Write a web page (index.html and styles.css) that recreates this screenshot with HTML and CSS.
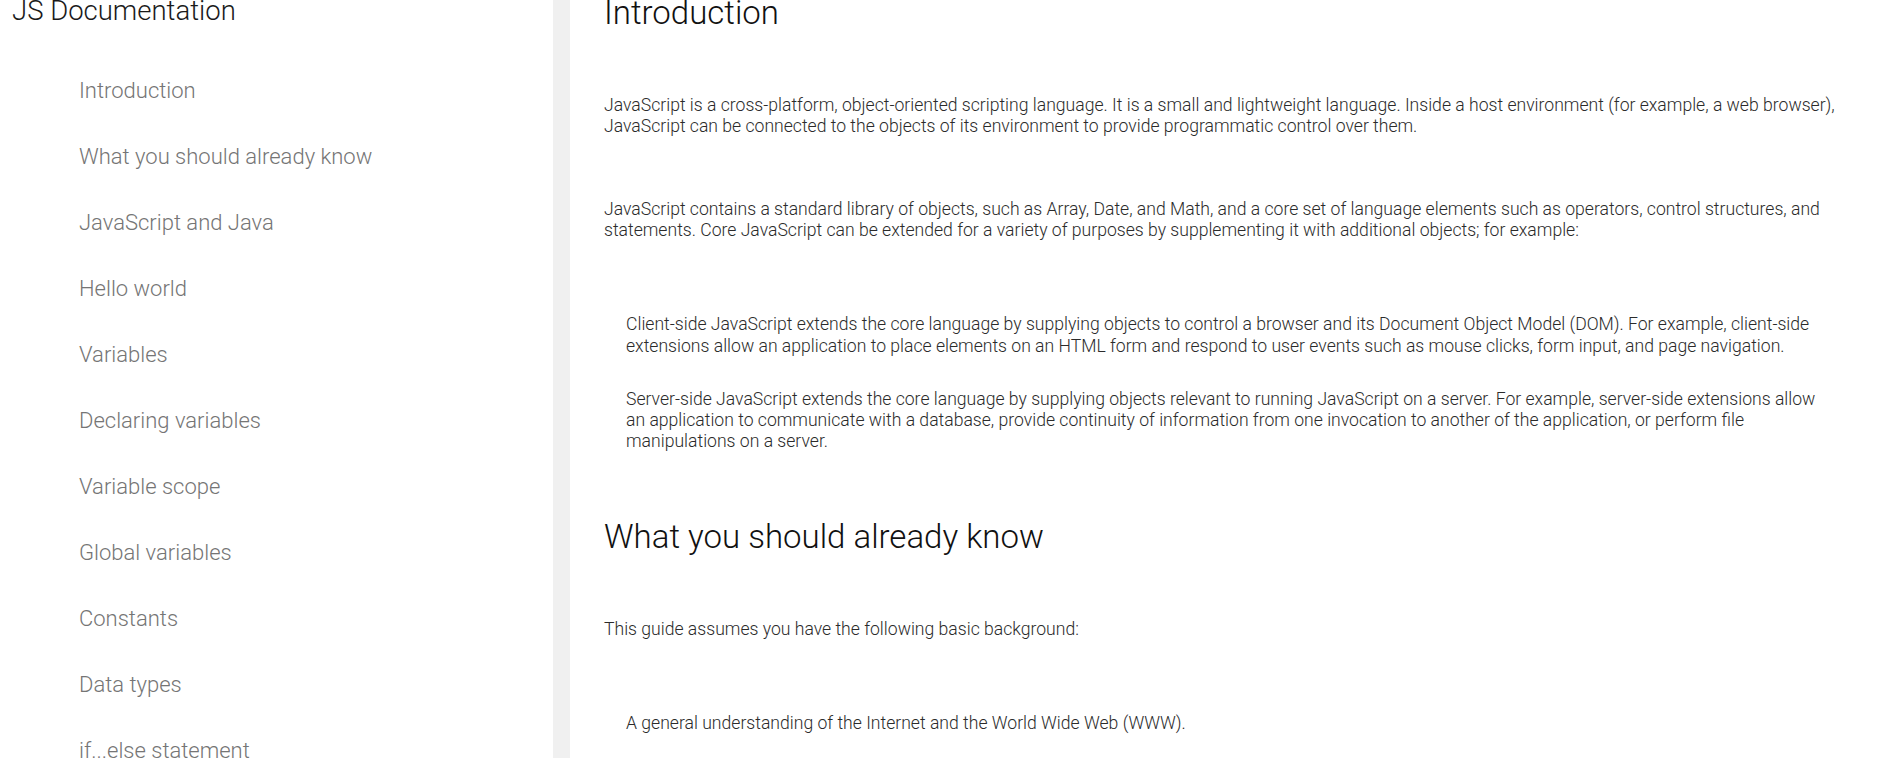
FILE: index.html
```html
<!DOCTYPE html>
<html lang="en">
<head>
<meta charset="utf-8">
<title>JS Documentation</title>
<link rel="stylesheet" href="styles.css">
</head>
<body>
<div class="page">
  <nav class="navbar">
    <header class="nav-title">JS Documentation</header>
    <ul class="nav-list">
      <li class="nav-item">Introduction</li>
      <li class="nav-item">What you should already know</li>
      <li class="nav-item">JavaScript and Java</li>
      <li class="nav-item">Hello world</li>
      <li class="nav-item">Variables</li>
      <li class="nav-item">Declaring variables</li>
      <li class="nav-item">Variable scope</li>
      <li class="nav-item">Global variables</li>
      <li class="nav-item">Constants</li>
      <li class="nav-item">Data types</li>
      <li class="nav-item">if...else statement</li>
    </ul>
  </nav>
  <div class="divider"></div>
  <main class="main">
    <section class="section">
      <header class="section-title">Introduction</header>
      <p class="para first">JavaScript is a cross-platform, object-oriented scripting language. It is a small and lightweight language. Inside a host environment (for example, a web browser), JavaScript can be connected to the objects of its environment to provide programmatic control over them.</p>
      <p class="para">JavaScript contains a standard library of objects, such as Array, Date, and Math, and a core set of language elements such as operators, control structures, and statements. Core JavaScript can be extended for a variety of purposes by supplementing it with additional objects; for example:</p>
      <ul class="bullets">
        <li class="bullet">Client-side JavaScript extends the core language by supplying objects to control a browser and its Document Object Model (DOM). For example, client-side extensions allow an application to place elements on an HTML form and respond to user events such as mouse clicks, form input, and page navigation.</li>
        <li class="bullet">Server-side JavaScript extends the core language by supplying objects relevant to running JavaScript on a server. For example, server-side extensions allow an application to communicate with a database, provide continuity of information from one invocation to another of the application, or perform file manipulations on a server.</li>
      </ul>
    </section>
    <section class="section">
      <header class="section-title">What you should already know</header>
      <p class="para first">This guide assumes you have the following basic background:</p>
      <ul class="bullets">
        <li class="bullet">A general understanding of the Internet and the World Wide Web (WWW).</li>
      </ul>
    </section>
  </main>
</div>
</body>
</html>
```

FILE: styles.css
```css
* { box-sizing: border-box; }
html, body {
  margin: 0;
  padding: 0;
  height: 100%;
  overflow: hidden;
  background: #ffffff;
}
body {
  font-family: Roboto, "Liberation Sans", sans-serif;
  font-weight: 300;
}
.page {
  display: flex;
  height: 758px;
  overflow: hidden;
}
.navbar {
  width: 553px;
  flex: none;
  background: #ffffff;
}
.nav-title {
  font-size: 27.5px;
  line-height: 28px;
  color: #1a1a1a;
  padding-left: 12px;
  margin-top: -3px;
  white-space: nowrap;
}
.nav-list {
  list-style: none;
  margin: 33px 0 0 0;
  padding: 0 0 0 79px;
}
.nav-item {
  font-size: 22px;
  line-height: 66px;
  height: 66px;
  color: #757575;
  white-space: nowrap;
}
.divider {
  width: 17px;
  flex: none;
  background: #f0f0f0;
}
.main {
  flex: 1;
  min-width: 0;
  padding: 0 44px 0 34px;
}
.section-title {
  font-size: 33px;
  line-height: 40px;
  color: #111;
  margin-top: -7px;
  white-space: nowrap;
}
.section + .section .section-title {
  margin-top: 65px;
}
.para {
  font-size: 17.6px;
  line-height: 1.2;
  color: #2b2b2b;
  margin: 62px 0 0 0;
}
.para.first {
  margin-top: 62px;
}
.bullets {
  list-style: none;
  margin: 73px 0 0 0;
  padding: 0 0 0 22px;
}
.bullet {
  font-size: 17.6px;
  line-height: 1.2;
  color: #2b2b2b;
}
.bullet + .bullet {
  margin-top: 32px;
}
```
